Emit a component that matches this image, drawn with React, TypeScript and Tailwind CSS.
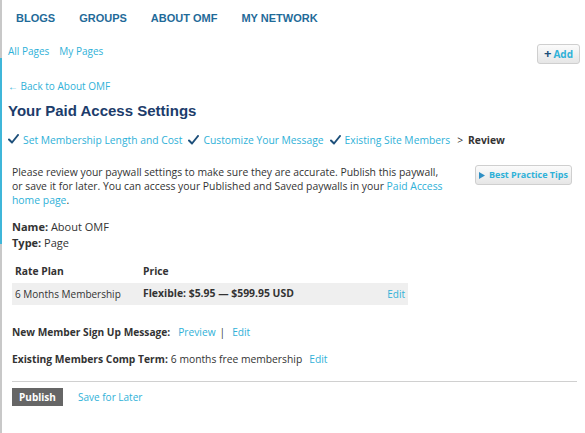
import React from "react";

const body = { fontFamily: '"Open Sans", "Noto Sans", sans-serif' };
const arial = { fontFamily: '"Liberation Sans", Arial, sans-serif' };

function Check() {
  return (
    <svg width="11" height="10" viewBox="0 0 11 10" className="inline-block mr-[4px] -mt-[2px]">
      <path d="M1 5.5 L4 8.5 L10 1" fill="none" stroke="#1d4f7a" strokeWidth="2" strokeLinecap="round" strokeLinejoin="round" />
    </svg>
  );
}

export default function App() {
  return (
    <div className="w-[585px] h-[433px] bg-white relative overflow-hidden text-[#333]" style={body}>
      <div className="absolute left-0 top-0 w-[2px] h-full bg-[#c8c8c8]" />
      <div className="absolute left-0 top-[58px] w-[2px] h-[186px] bg-[#3fb6d9]" />
      {/* nav */}
      <div className="flex gap-[24px] pl-[16px] pt-[10px] h-[36px] text-[11px] font-bold text-[#1f6b99]" style={arial}>
        <span>BLOGS</span>
        <span>GROUPS</span>
        <span>ABOUT OMF</span>
        <span>MY NETWORK</span>
      </div>
      {/* sub nav */}
      <div className="flex items-start justify-between pl-[8px] pr-[5px] h-[38px]">
        <div className="flex gap-[10px] text-[10px] text-[#2fb1d8] pt-[8px]">
          <span>All Pages</span>
          <span>My Pages</span>
        </div>
        <div className="mt-[8px] w-[43px] h-[20px] rounded-[3px] border border-[#cfcfcf] bg-gradient-to-b from-[#fbfbfb] to-[#e6e6e6] flex items-center justify-center gap-[2px] text-[10px] font-bold text-[#2fb1d8]">
          <span className="text-[#1d4f7a] text-[13px] leading-none -mt-[1px]">+</span>
          <span>Add</span>
        </div>
      </div>
      <div className="pl-[8px] text-[10px] text-[#2fb1d8] h-[18px] pt-[7px] leading-none">← Back to About OMF</div>
      <div className="pl-[8px] pt-[11px] text-[15px] font-bold text-[#1c3c6b] leading-none h-[41px]" style={arial}>
        Your Paid Access Settings
      </div>
      <div className="pl-[8px] flex items-center text-[10.3px] text-[#2fb1d8] h-[14px] leading-none">
        <Check />
        <span>Set Membership Length and Cost</span>
        <span className="ml-[6px]"><Check /></span>
        <span>Customize Your Message</span>
        <span className="ml-[6px]"><Check /></span>
        <span>Existing Site Members</span>
        <span className="ml-[7px] text-[#333]">&gt;</span>
        <span className="ml-[5px] font-bold text-[#333]">Review</span>
      </div>
      {/* intro */}
      <div className="flex justify-between pl-[12px] pr-[13px] mt-[18px]">
        <p className="text-[10.4px] leading-[14px] whitespace-nowrap">
          Please review your paywall settings to make sure they are accurate. Publish this paywall,
          <br />
          or save it for later. You can access your Published and Saved paywalls in your{" "}
          <span className="text-[#2fb1d8]">Paid Access</span>
          <br />
          <span className="text-[#2fb1d8]">home page</span>.
        </p>
        <div className="w-[97px] h-[20px] rounded-[3px] border border-[#cfcfcf] bg-gradient-to-b from-[#fbfbfb] to-[#e6e6e6] flex items-center justify-center gap-[4px] text-[9px] font-bold text-[#2fb1d8]">
          <svg width="6" height="7" viewBox="0 0 6 7"><path d="M0 0 L6 3.5 L0 7 Z" fill="#2f8fc4" /></svg>
          <span>Best Practice Tips</span>
        </div>
      </div>
      <div className="pl-[12px] mt-[12px] text-[11px] leading-[16px]">
        <div><b>Name:</b> About OMF</div>
        <div><b>Type:</b> Page</div>
      </div>
      {/* table */}
      <div className="ml-[12px] w-[396px] mt-[10px] text-[10px]">
        <div className="flex h-[22px] items-center font-bold text-[10.3px]">
          <span className="pl-[3px] w-[131px]">Rate Plan</span>
          <span>Price</span>
        </div>
        <div className="flex h-[22px] items-center bg-[#efefef]">
          <span className="pl-[3px] w-[131px]">6 Months Membership</span>
          <span className="font-bold flex-1 text-[10.4px]">Flexible: $5.95 — $599.95 USD</span>
          <span className="text-[#2fb1d8] pr-[3px]">Edit</span>
        </div>
      </div>
      <div className="pl-[12px] mt-[20px] text-[10.2px] leading-[14px] flex">
        <b>New Member Sign Up Message:</b>
        <span className="ml-[8px] text-[#2fb1d8]">Preview</span>
        <span className="ml-[4px]">|</span>
        <span className="ml-[7px] text-[#2fb1d8]">Edit</span>
      </div>
      <div className="pl-[12px] mt-[13px] text-[10.3px] leading-[14px] flex">
        <b>Existing Members Comp Term:</b>
        <span className="ml-[3px]">6 months free membership</span>
        <span className="ml-[7px] text-[#2fb1d8]">Edit</span>
      </div>
      <div className="ml-[12px] mr-[8px] mt-[15px] border-t border-[#d0d0d0]" />
      <div className="pl-[12px] mt-[6px] flex items-center gap-[15px] text-[10px]">
        <div className="w-[51px] h-[18px] bg-[#666] text-white font-bold flex items-center justify-center">Publish</div>
        <span className="text-[#2fb1d8]">Save for Later</span>
      </div>
    </div>
  );
}
